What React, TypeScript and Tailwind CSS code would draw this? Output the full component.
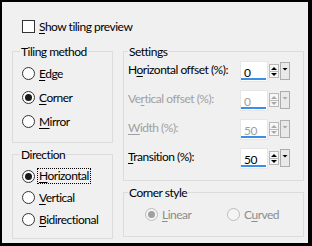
import React from "react";

const FONT = { fontFamily: 'Lato, "Noto Sans", sans-serif' };

function U({ children }: { children: React.ReactNode }) {
  return <span className="underline underline-offset-[2px] decoration-[1px]">{children}</span>;
}

function Radio({ checked, disabled }: { checked?: boolean; disabled?: boolean }) {
  return (
    <span
      className={
        "flex items-center justify-center w-[13px] h-[13px] rounded-full border shrink-0 " +
        (disabled ? "border-[#bcbcbc] bg-[#f4f4f4]" : "border-[#333333] bg-white")
      }
    >
      {checked && (
        <span className={"w-[7px] h-[7px] rounded-full " + (disabled ? "bg-[#a0a0a0]" : "bg-[#1a1a1a]")} />
      )}
    </span>
  );
}

function RadioRow({
  checked,
  disabled,
  children,
  focus,
}: {
  checked?: boolean;
  disabled?: boolean;
  children: React.ReactNode;
  focus?: boolean;
}) {
  return (
    <div className="flex items-center gap-[4px]">
      <Radio checked={checked} disabled={disabled} />
      <span
        className={
          (disabled ? "text-[#8c8c8c] " : "text-black ") +
          (focus ? "outline outline-1 outline-dotted outline-black px-[1px] -ml-[1px] leading-[14px]" : "")
        }
      >
        {children}
      </span>
    </div>
  );
}

function Spin({ value, disabled }: { value: string; disabled?: boolean }) {
  const arrow = disabled ? "#a8a8a8" : "#000";
  return (
    <div className="flex items-start">
      <div className="relative w-[28px] h-[21px] bg-white border border-[#e6e6e6]">
        <span className={"absolute left-[3px] top-[3px] " + (disabled ? "text-[#a0a0a0]" : "text-black")}>{value}</span>
        <span className="absolute left-0 right-[1px] bottom-[1px] h-[2px] bg-[#3b8ee8]" />
      </div>
      <div className="ml-[1px] mt-[3px] w-[10px] h-[14px] border border-[#b9b9b9] bg-[#f7f7f7] flex flex-col">
        <svg width="8" height="6" viewBox="0 0 8 6" className="block">
          <path d="M1 5 L4 2 L7 5 Z" fill={arrow} />
        </svg>
        <div className="h-[1px] bg-[#b9b9b9]" />
        <svg width="8" height="5" viewBox="0 0 8 5" className="block">
          <path d="M1 1 L4 4 L7 1 Z" fill={arrow} />
        </svg>
      </div>
      <div className="ml-[1px] mt-[1px] w-[10px] h-[18px] border border-[#adadad] bg-[#e9e9e9] flex justify-center">
        <svg width="8" height="8" viewBox="0 0 8 8" className="block mt-[2px]">
          <path d="M1.5 3 L4 5.5 L6.5 3 Z" fill={arrow} />
        </svg>
      </div>
    </div>
  );
}

function SettingRow({
  label,
  value,
  disabled,
}: {
  label: React.ReactNode;
  value: string;
  disabled?: boolean;
}) {
  return (
    <div className="flex items-start h-[29px]">
      <span className={"w-[112px] pt-[1px] whitespace-nowrap " + (disabled ? "text-[#a0a0a0]" : "text-black")}>
        {label}
      </span>
      <Spin value={value} disabled={disabled} />
    </div>
  );
}

export default function App() {
  return (
    <div
      className="w-[312px] h-[246px] border-l-2 border-t-2 border-r-[4px] border-b-[3px] border-black bg-[#f0f0f0] text-[12px] leading-[15px] tracking-[-0.5px] text-black overflow-hidden"
      style={FONT}
    >
      <div className="h-[42px] pt-[18px] pl-[20px] flex items-start gap-[4px]">
        <span className="w-[13px] h-[13px] border border-[#333333] bg-white shrink-0" />
        <span className="-mt-[1px]">
          <U>S</U>how tiling preview
        </span>
      </div>
      <div className="flex pl-[10px]">
        <div className="w-[101px] flex flex-col">
          <fieldset className="h-[99px] border border-[#dcdcdc]">
            <legend className="ml-[7px] px-[1px]">Tiling method</legend>
            <div className="flex flex-col gap-[9px] pt-[7px] pl-[9px]">
              <RadioRow>
                <U>E</U>dge
              </RadioRow>
              <RadioRow checked>
                <U>C</U>orner
              </RadioRow>
              <RadioRow>
                <U>M</U>irror
              </RadioRow>
            </div>
          </fieldset>
          <fieldset className="mt-[4px] h-[92px] border border-[#dcdcdc]">
            <legend className="ml-[7px] px-[1px]">Direction</legend>
            <div className="flex flex-col gap-[7px] pt-[7px] pl-[9px]">
              <RadioRow checked focus>
                <U>H</U>orizontal
              </RadioRow>
              <RadioRow>
                <U>V</U>ertical
              </RadioRow>
              <RadioRow>
                <U>B</U>idirectional
              </RadioRow>
            </div>
          </fieldset>
        </div>
        <div className="ml-[10px] w-[181px] flex flex-col">
          <fieldset className="h-[137px] border border-[#dcdcdc]">
            <legend className="ml-[4px] px-[1px]">Settings</legend>
            <div className="flex flex-col pt-[2px] pl-[4px]">
              <SettingRow
                label={
                  <>
                    H<U>o</U>rizontal offset (%):
                  </>
                }
                value="0"
              />
              <SettingRow
                label={
                  <>
                    Ve<U>r</U>tical offset (%):
                  </>
                }
                value="0"
                disabled
              />
              <SettingRow
                label={
                  <>
                    <U>W</U>idth (%):
                  </>
                }
                value="50"
                disabled
              />
              <SettingRow
                label={
                  <>
                    <U>T</U>ransition (%):
                  </>
                }
                value="50"
              />
            </div>
          </fieldset>
          <fieldset className="mt-[4px] h-[52px] border border-[#dcdcdc]">
            <legend className="ml-[4px] px-[1px]">Corner style</legend>
            <div className="flex items-center pt-[7px] pl-[21px]">
              <div className="w-[82px]">
                <RadioRow checked disabled>
                  <U>L</U>inear
                </RadioRow>
              </div>
              <RadioRow disabled>
                C<U>u</U>rved
              </RadioRow>
            </div>
          </fieldset>
        </div>
      </div>
    </div>
  );
}
